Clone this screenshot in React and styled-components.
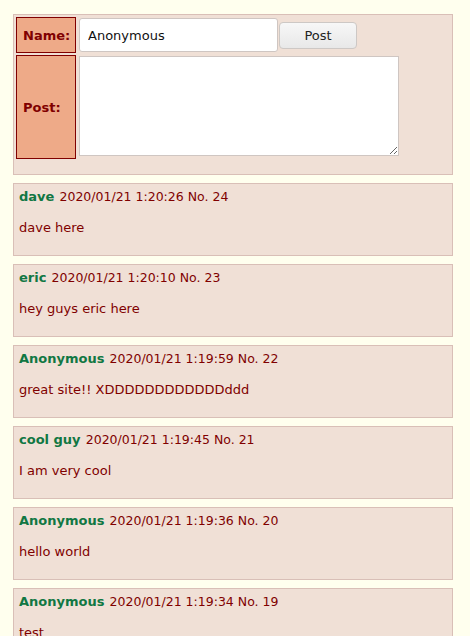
import React, { useState } from 'react';
import styled, { createGlobalStyle } from 'styled-components';

const posts = [
  { no: 24, name: 'dave', date: '2020/01/21 1:20:26', body: 'dave here' },
  { no: 23, name: 'eric', date: '2020/01/21 1:20:10', body: 'hey guys eric here' },
  { no: 22, name: 'Anonymous', date: '2020/01/21 1:19:59', body: 'great site!! XDDDDDDDDDDDDddd' },
  { no: 21, name: 'cool guy', date: '2020/01/21 1:19:45', body: 'I am very cool' },
  { no: 20, name: 'Anonymous', date: '2020/01/21 1:19:36', body: 'hello world' },
  { no: 19, name: 'Anonymous', date: '2020/01/21 1:19:34', body: 'test' },
];

const GlobalStyle = createGlobalStyle`
  html, body {
    margin: 0;
    padding: 0;
    background: #ffffee;
  }
  body {
    font-family: "DejaVu Sans", Verdana, sans-serif;
    font-size: 13px;
    color: #800000;
  }
`;

function App() {
  const [name, setName] = useState('Anonymous');
  const [text, setText] = useState('');

  return (
    <Page>
      <GlobalStyle />
      <FormBox>
        <Label>Name:</Label>
        <NameCell>
          <NameInput value={name} onChange={(e) => setName(e.target.value)} />
          <PostButton>Post</PostButton>
        </NameCell>
        <Label>Post:</Label>
        <TextCell>
          <PostText value={text} onChange={(e) => setText(e.target.value)} />
        </TextCell>
      </FormBox>

      {posts.map((p) => (
        <PostBox key={p.no}>
          <PostHead>
            <PosterName>{p.name}</PosterName> <DateTime>{p.date} No. {p.no}</DateTime>
          </PostHead>
          <PostBody>{p.body}</PostBody>
        </PostBox>
      ))}
    </Page>
  );
}

const Page = styled.div`
  padding: 14px 0 0 13px;
  display: flex;
  flex-direction: column;
  gap: 8px;
`;

const FormBox = styled.div`
  width: 440px;
  box-sizing: border-box;
  background: #f0e0d6;
  border: 1px solid #d9bfb7;
  padding: 2px 2px 15px 2px;
  display: grid;
  grid-template-columns: 60px auto;
  grid-template-rows: 36px 104px;
  gap: 2px;
  align-items: stretch;
`;

const Label = styled.div`
  box-sizing: border-box;
  background: #eeaa88;
  border: 1px solid #800000;
  color: #800000;
  font-weight: bold;
  font-size: 13px;
  display: flex;
  align-items: center;
  padding-left: 6px;
`;

const NameCell = styled.div`
  display: flex;
  align-items: center;
  padding: 1px;
  gap: 1px;
`;

const NameInput = styled.input`
  box-sizing: border-box;
  width: 199px;
  height: 34px;
  border: 1px solid #cfc6c2;
  border-radius: 3px;
  background: #fff;
  padding: 0 8px;
  font-family: "DejaVu Sans", Verdana, sans-serif;
  font-size: 13px;
  color: #111;
  outline: none;
`;

const PostButton = styled.button`
  box-sizing: border-box;
  width: 78px;
  height: 27px;
  border: 1px solid #cdc8c5;
  border-radius: 4px;
  background: linear-gradient(#f7f7f7, #e8e8e8);
  font-family: "DejaVu Sans", Verdana, sans-serif;
  font-size: 13px;
  color: #222;
  padding: 0;
`;

const TextCell = styled.div`
  padding: 1px;
`;

const PostText = styled.textarea`
  box-sizing: border-box;
  display: block;
  width: 320px;
  height: 100px;
  border: 1px solid #cfc6c2;
  background: #fff;
  margin: 0;
  outline: none;
  font-family: "DejaVu Sans", Verdana, sans-serif;
  font-size: 13px;
`;

const PostBox = styled.div`
  width: 440px;
  height: 73px;
  box-sizing: border-box;
  background: #f0e0d6;
  border: 1px solid #d9bfb7;
  padding: 5px 5px 0 5px;
  flex-shrink: 0;
`;

const PostHead = styled.div`
  line-height: 16px;
  color: #800000;
`;

const PosterName = styled.span`
  color: #117743;
  font-weight: bold;
`;

const DateTime = styled.span`
  font-size: 12.5px;
  margin-left: 1px;
`;

const PostBody = styled.div`
  margin-top: 15px;
  line-height: 16px;
  color: #800000;
`;

export default App;
